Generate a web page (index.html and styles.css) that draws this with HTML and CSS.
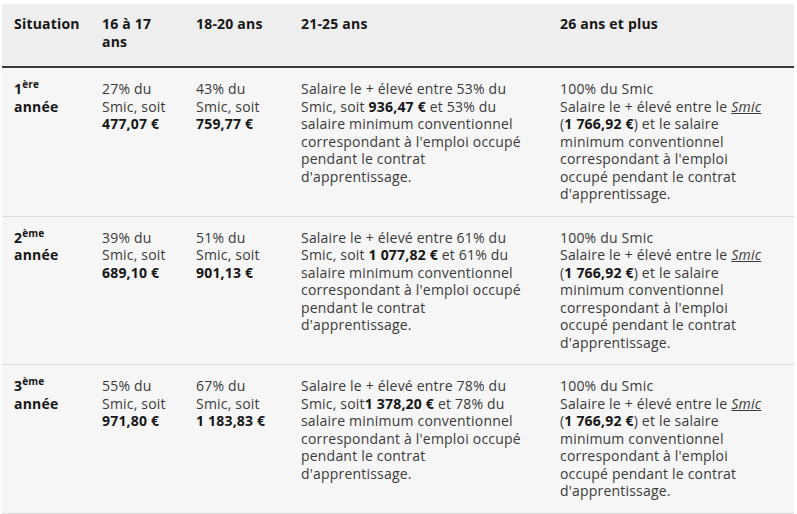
FILE: index.html
```html
<!DOCTYPE html>
<html lang="fr">
<head>
<meta charset="utf-8">
<link rel="stylesheet" href="styles.css">
</head>
<body>
<table class="grid">
  <colgroup>
    <col class="c1"><col class="c2"><col class="c3"><col class="c4"><col class="c5">
  </colgroup>
  <thead>
    <tr>
      <th>Situation</th>
      <th>16 à 17 ans</th>
      <th>18-20 ans</th>
      <th>21-25 ans</th>
      <th>26 ans et plus</th>
    </tr>
  </thead>
  <tbody>
    <tr>
      <td class="lead">1<sup>ère</sup><br>année</td>
      <td>27% du Smic, soit <b>477,07&nbsp;€</b></td>
      <td>43% du Smic, soit <b>759,77&nbsp;€</b></td>
      <td>Salaire le + élevé entre 53% du Smic, soit <b>936,47&nbsp;€</b> et 53% du salaire minimum conventionnel correspondant à l'emploi occupé pendant le contrat d'apprentissage.</td>
      <td class="last">100% du Smic<br>Salaire le + élevé entre le <a class="lnk">Smic</a> <span class="nw">(<b>1&nbsp;766,92&nbsp;€</b>)</span> et le salaire minimum conventionnel correspondant à l'emploi occupé pendant le contrat d'apprentissage.</td>
    </tr>
    <tr>
      <td class="lead">2<sup>ème</sup><br>année</td>
      <td>39% du Smic, soit <b>689,10&nbsp;€</b></td>
      <td>51% du Smic, soit <b>901,13&nbsp;€</b></td>
      <td>Salaire le + élevé entre 61% du Smic, soit <b>1&nbsp;077,82&nbsp;€</b> et 61% du salaire minimum conventionnel correspondant à l'emploi occupé pendant le contrat d'apprentissage.</td>
      <td class="last">100% du Smic<br>Salaire le + élevé entre le <a class="lnk">Smic</a> <span class="nw">(<b>1&nbsp;766,92&nbsp;€</b>)</span> et le salaire minimum conventionnel correspondant à l'emploi occupé pendant le contrat d'apprentissage.</td>
    </tr>
    <tr>
      <td class="lead">3<sup>ème</sup><br>année</td>
      <td>55% du Smic, soit <b>971,80&nbsp;€</b></td>
      <td>67% du Smic, soit <b>1&nbsp;183,83&nbsp;€</b></td>
      <td>Salaire le + élevé entre 78% du Smic, soit<b>1&nbsp;378,20&nbsp;€</b> et 78% du salaire minimum conventionnel correspondant à l'emploi occupé pendant le contrat d'apprentissage.</td>
      <td class="last">100% du Smic<br>Salaire le + élevé entre le <a class="lnk">Smic</a> <span class="nw">(<b>1&nbsp;766,92&nbsp;€</b>)</span> et le salaire minimum conventionnel correspondant à l'emploi occupé pendant le contrat d'apprentissage.</td>
    </tr>
  </tbody>
</table>
</body>
</html>
```

FILE: styles.css
```css
html, body {
  margin: 0;
  padding: 0;
  background: #ffffff;
}
body {
  font-family: "Open Sans", "Noto Sans", sans-serif;
  font-size: 14px;
  letter-spacing: 0.2px;
  color: #3a3a3a;
}
.grid {
  margin: 4px 0 0 2px;
  width: 792px;
  table-layout: fixed;
  border-collapse: collapse;
  border-spacing: 0;
}
.c1 { width: 88px; }
.c2 { width: 94px; }
.c3 { width: 105px; }
.c4 { width: 259px; }
.c5 { width: 246px; }
th {
  background: #eeeeee;
  color: #161616;
  font-weight: 700;
  text-align: left;
  vertical-align: top;
  line-height: 18px;
  padding: 11px 12px 15px 12px;
  border-bottom: 2px solid #3a3a3a;
}
td {
  background: #f6f6f6;
  vertical-align: top;
  line-height: 17.5px;
  padding: 12px 12px 13px 12px;
  border-bottom: 1px solid #dddddd;
}
td.last {
  padding-right: 16px;
}
td b {
  font-weight: 700;
  color: #161616;
}
.nw {
  white-space: nowrap;
}
.lead {
  font-weight: 700;
  color: #161616;
}
.lead sup {
  font-size: 10px;
  line-height: 0;
}
.lnk {
  font-style: italic;
  text-decoration: underline;
  color: #3a3a3a;
}
```
